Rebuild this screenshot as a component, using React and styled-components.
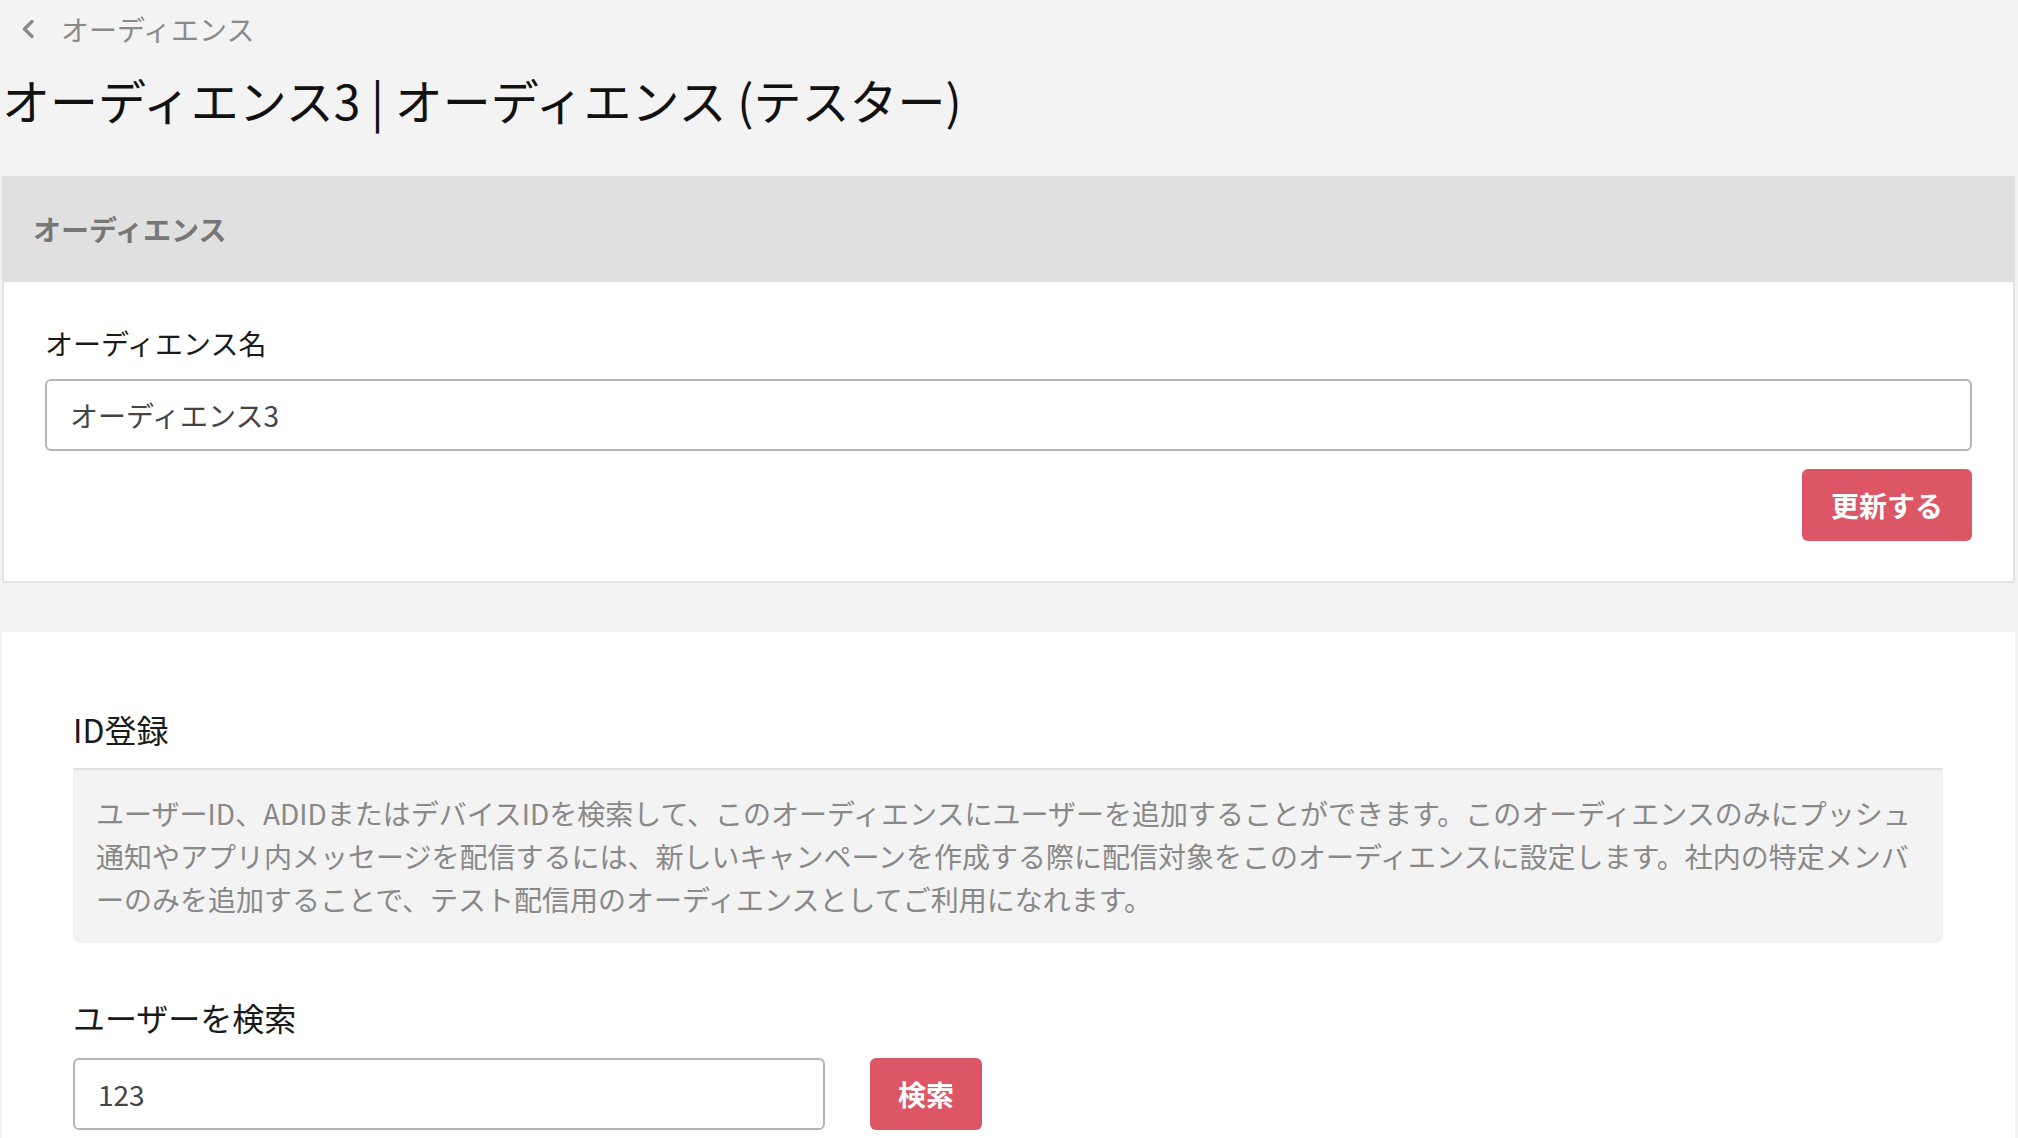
import React from 'react';
import styled, { createGlobalStyle } from 'styled-components';

const GlobalStyle = createGlobalStyle`
  body {
    margin: 0;
    background: #f3f3f3;
    font-family: 'Noto Sans CJK JP', 'Noto Sans', sans-serif;
    color: #1a1a1a;
  }
`;

const Page = styled.div`
  padding: 0 3px 0 2px;
`;

const Breadcrumb = styled.div`
  display: flex;
  align-items: center;
  gap: 25px;
  height: 57px;
  padding-left: 18px;
  font-size: 28px;
  color: #8a8a8a;
`;

const Title = styled.h1`
  margin: 12px 0 47px 0;
  font-size: 48px;
  font-weight: 400;
  line-height: 60px;
  color: #111;
`;

/* 上のカード */
const Card = styled.section`
  background: #fff;
  border: 2px solid #e4e4e4;
  border-top: none;
`;

const CardHeader = styled.div`
  display: flex;
  align-items: center;
  height: 106px;
  margin: 0 -2px;
  padding: 0 31px;
  background: #e0e0e0;
  font-size: 28px;
  font-weight: 700;
  color: #777;
`;

const CardBody = styled.div`
  display: flex;
  flex-direction: column;
  padding: 41px 41px 40px;
`;

const Label = styled.div`
  font-size: ${(p) => (p.$large ? '32px' : '28px')};
  line-height: ${(p) => (p.$large ? '44px' : '40px')};
  color: #1a1a1a;
`;

const TextInput = styled.input`
  box-sizing: border-box;
  width: ${(p) => p.$width || '100%'};
  height: 72px;
  margin: 0;
  padding: 0 23px;
  border: 2px solid #b4b4ba;
  border-radius: 6px;
  background: #fff;
  font-family: inherit;
  font-size: 28px;
  color: #444;
  outline: none;
`;

const Button = styled.button`
  box-sizing: border-box;
  height: 72px;
  padding: 0 ${(p) => p.$pad || '29px'};
  border: none;
  border-radius: 6px;
  background: #dc5666;
  font-family: inherit;
  font-size: 28px;
  font-weight: 700;
  color: #fff;
  cursor: pointer;
`;

const Actions = styled.div`
  display: flex;
  justify-content: flex-end;
  margin-top: 18px;
`;

/* ID登録カード */
const Panel = styled.section`
  margin-top: 49px;
  padding: 75px 72px 60px 71px;
  background: #fff;
`;

const Notice = styled.p`
  margin: 17px 0 0;
  padding: 22px 21px 22px 23px;
  border-top: 2px solid #e0e0e0;
  border-radius: 0 0 6px 6px;
  background: #f3f3f3;
  font-size: 28px;
  line-height: 43px;
  color: #888;
  line-break: loose;
`;

const SearchRow = styled.div`
  display: flex;
  gap: 45px;
  margin-top: 19px;
`;

const Chevron = () => (
  <svg width="16" height="20" viewBox="0 0 16 20">
    <polyline
      points="12,2.5 4.5,10 12,17.5"
      fill="none"
      stroke="#8a8a8a"
      strokeWidth="3.4"
      strokeLinecap="round"
      strokeLinejoin="round"
    />
  </svg>
);

const App = () => {
  return (
    <Page>
      <GlobalStyle />
      <Breadcrumb>
        <Chevron />
        <span>オーディエンス</span>
      </Breadcrumb>
      <Title>オーディエンス3 | オーディエンス (テスター)</Title>

      <Card>
        <CardHeader>オーディエンス</CardHeader>
        <CardBody>
          <Label>オーディエンス名</Label>
          <TextInput style={{ marginTop: 16 }} defaultValue="オーディエンス3" />
          <Actions>
            <Button>更新する</Button>
          </Actions>
        </CardBody>
      </Card>

      <Panel>
        <Label $large>ID登録</Label>
        <Notice lang="ja">
          ユーザーID、ADIDまたはデバイスIDを検索して、このオーディエンスにユーザーを追加することができます。このオーディエンスのみにプッシュ通知やアプリ内メッセージを配信するには、新しいキャンペーンを作成する際に配信対象をこのオーディエンスに設定します。社内の特定メンバーのみを追加することで、テスト配信用のオーディエンスとしてご利用になれます。
        </Notice>
        <Label $large style={{ marginTop: 52 }}>ユーザーを検索</Label>
        <SearchRow>
          <TextInput $width="752px" defaultValue="123" />
          <Button $pad="28px">検索</Button>
        </SearchRow>
      </Panel>
    </Page>
  );
};

export default App;
